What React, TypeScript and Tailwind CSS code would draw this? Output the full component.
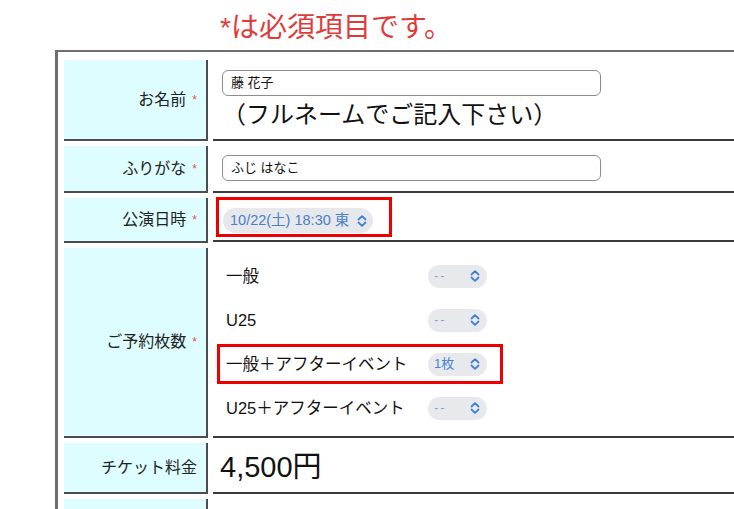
import type { ReactNode } from "react";

const FONT = { fontFamily: '"Liberation Sans", "Noto Sans CJK JP", sans-serif' };

function Chevrons() {
  return (
    <svg width="10" height="12" viewBox="0 0 10 12" fill="none" stroke="#3f7fd6" strokeWidth="1.8" strokeLinecap="round" strokeLinejoin="round">
      <path d="M1.5 4.5 L5 1.2 L8.5 4.5" />
      <path d="M1.5 7.5 L5 10.8 L8.5 7.5" />
    </svg>
  );
}

function Label({ text, req = true, h }: { text: string; req?: boolean; h: string }) {
  return (
    <div className={`${h} flex items-center justify-end pr-[9px] bg-[#ddfdff] border-r-2 border-b-2 border-[#4d4d4d] text-[16px] text-[#222]`}>
      <span>{text}</span>
      {req && <span className="ml-[6px] text-[12px] leading-none text-[#e05050]">*</span>}
    </div>
  );
}

function Value({ h, children, className = "" }: { h: string; children?: ReactNode; className?: string }) {
  return <div className={`${h} border-b-2 border-[#3a3a3a] ${className}`}>{children}</div>;
}

function TextInput({ value }: { value: string }) {
  return (
    <div className="w-[379px] h-[26px] rounded-[6px] border border-[#8c8c8c] bg-white flex items-center pl-[8px] text-[13px] text-[#111]">
      {value}
    </div>
  );
}

function Pill({ value, active = false }: { value: string; active?: boolean }) {
  return (
    <div className="w-[59px] h-[23px] rounded-full bg-[#e8e9ed] flex items-center justify-between pl-[6px] pr-[7px]">
      <span className={`text-[13px] ${active ? "text-[#4a84d0]" : "text-[#86a2cc] tracking-[2px]"}`}>{value}</span>
      <Chevrons />
    </div>
  );
}

const TICKETS = [
  { label: "一般", value: "--" },
  { label: "U25", value: "--" },
  { label: "一般＋アフターイベント", value: "1枚", active: true },
  { label: "U25＋アフターイベント", value: "--" },
];

export default function App() {
  return (
    <div className="w-[734px] h-[509px] overflow-hidden bg-white" style={FONT}>
      <div className="h-[50px] pt-[12px] pl-[220px] text-[28px] leading-[32px] text-[#e03b3b]">
        *は必須項目です。
      </div>

      <div className="ml-[55px] w-[800px] border-l-[3px] border-t-2 border-[#6d6d72] pl-[6px] pt-[8px]">
        <div className="grid grid-cols-[144px_1fr] gap-x-[5px] gap-y-[5px]">
          <Label text="お名前" h="h-[81px]" />
          <Value h="h-[81px]" className="pl-[9px] pt-[10px]">
            <TextInput value="藤 花子" />
            <div className="mt-[3px] text-[24px] leading-[32px] text-[#111]">（フルネームでご記入下さい）</div>
          </Value>

          <Label text="ふりがな" h="h-[47px]" />
          <Value h="h-[47px]" className="pl-[9px] pt-[9px]">
            <TextInput value="ふじ はなこ" />
          </Value>

          <Label text="公演日時" h="h-[45px]" />
          <Value h="h-[45px]" className="pl-[3px] -mt-[1px]">
            <div className="w-[176px] h-[40px] border-[3px] border-[#ee0000] pl-[4px] pt-[8px]">
              <div className="w-[150px] h-[25px] rounded-full bg-[#e6e8ec] flex items-center justify-between pl-[7px] pr-[6px]">
                <span className="text-[14.5px] text-[#4a80c8]">10/22(土) 18:30 東</span>
                <Chevrons />
              </div>
            </div>
          </Value>

          <Label text="ご予約枚数" h="h-[190px]" />
          <Value h="h-[190px]" className="pl-[4px] pt-[8px] flex flex-col gap-[4px]">
            {TICKETS.map((t) => (
              <div
                key={t.label}
                className={`w-[286px] h-[40px] border-[3px] flex items-center pl-[6px] ${t.active ? "border-[#ee0000]" : "border-transparent"}`}
              >
                <span className="w-[202px] text-[16.5px] text-[#111]">{t.label}</span>
                <Pill value={t.value} active={t.active} />
              </div>
            ))}
          </Value>

          <Label text="チケット料金" req={false} h="h-[51px]" />
          <Value h="h-[51px]" className="pl-[7px] flex items-center">
            <span className="text-[29px] text-[#111]">4,500円</span>
          </Value>

          <Label text="" req={false} h="h-[60px]" />
          <Value h="h-[60px]" />
        </div>
      </div>
    </div>
  );
}
